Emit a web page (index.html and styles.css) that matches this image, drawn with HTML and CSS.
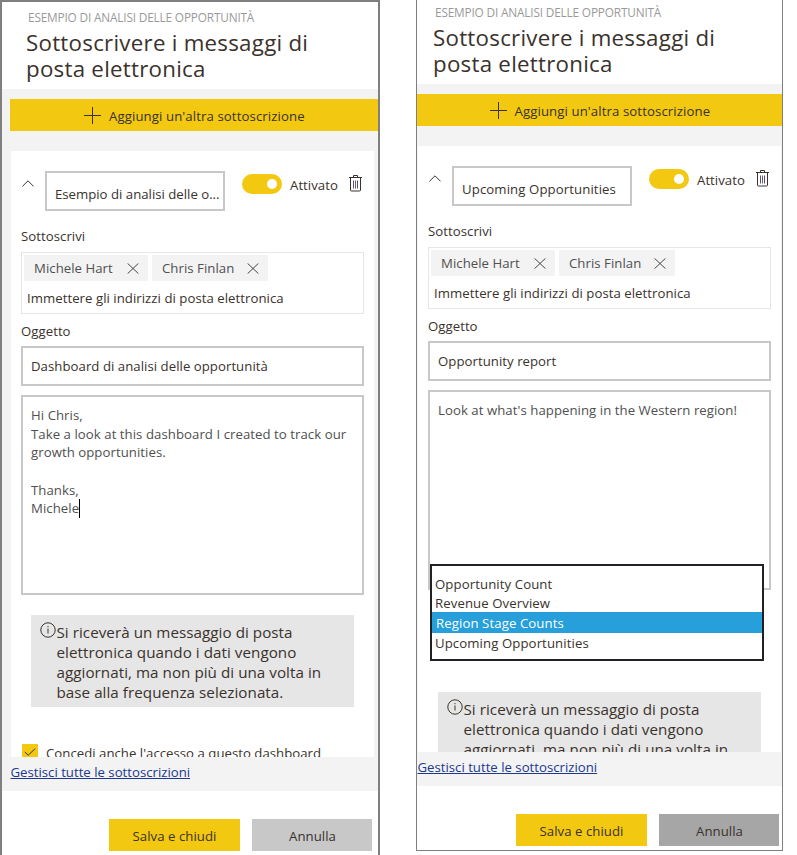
FILE: index.html
```html
<!DOCTYPE html>
<html lang="it">
<head>
<meta charset="utf-8">
<title>Sottoscrivere i messaggi di posta elettronica</title>
<link rel="stylesheet" href="styles.css">
</head>
<body>
<svg class="sprite" aria-hidden="true">
  <symbol id="plus" viewBox="0 0 17 17"><path d="M8.5 0v17M0 8.5h17"/></symbol>
  <symbol id="chevron" viewBox="0 0 12 7"><path d="M.4 6.4 6 .8l5.600 5.600"/></symbol>
  <symbol id="close" viewBox="0 0 12 11"><path d="M.6.4 11.400 10.600M11.400.4.6 10.600"/></symbol>
  <symbol id="info" viewBox="0 0 16 16"><circle cx="8" cy="8" r="7.200"/><path d="M8 6.500v5M8 4v1.200"/></symbol>
  <symbol id="trash" viewBox="0 0 13 17"><path d="M0 2.500h13M4.500 2.500v-2h4v2M1.500 2.500v12.500q0 1 1 1h8q1 0 1-1V2.500"/><path class="bar-a" d="M4.500 5.500v8"/><path class="bar-b" d="M6.500 5.500v8"/><path class="bar-a" d="M8.500 5.500v8"/></symbol>
  <symbol id="check" viewBox="0 0 12 8"><path d="M.8 4 4.200 7.200 11.200.6"/></symbol>
</svg>
<main class="stage">
  <section class="panel panel-left">
    <header class="head">
      <div class="eyebrow">ESEMPIO DI ANALISI DELLE OPPORTUNITÀ</div>
      <h1>Sottoscrivere i messaggi di<br>posta elettronica</h1>
    </header>
    <div class="body">
      <div class="add"><svg class="i-plus"><use href="#plus"/></svg><span>Aggiungi un'altra sottoscrizione</span></div>
      <div class="card">
        <div class="top">
          <svg class="i-chevron"><use href="#chevron"/></svg>
          <div class="name">Esempio di analisi delle o...</div>
          <div class="toggle"><i></i></div>
          <span class="state">Attivato</span>
          <svg class="i-trash"><use href="#trash"/></svg>
        </div>
        <div class="label">Sottoscrivi</div>
        <div class="people">
          <div class="tags">
            <span class="tag tag-one">Michele Hart<svg class="i-close"><use href="#close"/></svg></span>
            <span class="tag tag-two">Chris Finlan<svg class="i-close"><use href="#close"/></svg></span>
          </div>
          <div class="hint">Immettere gli indirizzi di posta elettronica</div>
        </div>
        <div class="label label-subject">Oggetto</div>
        <div class="subject">Dashboard di analisi delle opportunità</div>
        <div class="message">Hi Chris,<br>Take a look at this dashboard I created to track our<br>growth opportunities.<br><br>Thanks,<br>Michele<span class="caret"></span></div>
        <div class="notice"><svg class="i-info"><use href="#info"/></svg><p>Si riceverà un messaggio di posta<br>elettronica quando i dati vengono<br>aggiornati, ma non più di una volta in<br>base alla frequenza selezionata.</p></div>
        <div class="grant"><span class="box"><svg class="i-check"><use href="#check"/></svg></span><span>Concedi anche l'accesso a questo dashboard</span></div>
      </div>
      <div class="manage"><a>Gestisci tutte le sottoscrizioni</a></div>
    </div>
    <footer class="actions"><div class="btn save">Salva e chiudi</div><div class="btn cancel">Annulla</div></footer>
  </section>

  <section class="panel panel-right">
    <header class="head">
      <div class="eyebrow">ESEMPIO DI ANALISI DELLE OPPORTUNITÀ</div>
      <h1>Sottoscrivere i messaggi di<br>posta elettronica</h1>
    </header>
    <div class="body">
      <div class="add"><svg class="i-plus"><use href="#plus"/></svg><span>Aggiungi un'altra sottoscrizione</span></div>
      <div class="card">
        <div class="top">
          <svg class="i-chevron"><use href="#chevron"/></svg>
          <div class="name">Upcoming Opportunities</div>
          <div class="toggle"><i></i></div>
          <span class="state">Attivato</span>
          <svg class="i-trash"><use href="#trash"/></svg>
        </div>
        <div class="label">Sottoscrivi</div>
        <div class="people">
          <div class="tags">
            <span class="tag tag-one">Michele Hart<svg class="i-close"><use href="#close"/></svg></span>
            <span class="tag tag-two">Chris Finlan<svg class="i-close"><use href="#close"/></svg></span>
          </div>
          <div class="hint">Immettere gli indirizzi di posta elettronica</div>
        </div>
        <div class="label label-subject">Oggetto</div>
        <div class="subject">Opportunity report</div>
        <div class="message">Look at what's happening in the Western region!
          <div class="menu">
            <div>Opportunity Count</div>
            <div>Revenue Overview</div>
            <div class="selected">Region Stage Counts</div>
            <div>Upcoming Opportunities</div>
          </div>
        </div>
        <div class="notice"><svg class="i-info"><use href="#info"/></svg><p>Si riceverà un messaggio di posta<br>elettronica quando i dati vengono<br>aggiornati, ma non più di una volta in</p></div>
      </div>
      <div class="manage"><a>Gestisci tutte le sottoscrizioni</a></div>
    </div>
    <footer class="actions"><div class="btn save">Salva e chiudi</div><div class="btn cancel">Annulla</div></footer>
  </section>
</main>
</body>
</html>
```
FILE: styles.css
```css
* { box-sizing: border-box; }
body { margin: 0; background: #fff; color: #3a322c; font: 13.2px/18px "Open Sans", "Noto Sans", sans-serif; letter-spacing: .04px; overflow: hidden; }
svg { display: block; flex: none; fill: none; stroke: #3a322c; stroke-width: 1; }
.sprite { width: 0; height: 0; position: absolute; }
.stage { display: flex; align-items: flex-start; height: 855px; overflow: hidden; white-space: nowrap; }
.panel { flex: none; display: flex; flex-direction: column; background: #fff; }
.panel-left { width: 380px; height: 870px; border: 2px solid #7f7f7f; }
.panel-right { width: 367px; height: 851px; margin-left: 36px; border: 1px solid #7f7f7f; border-top: 0; }
.head { height: 87px; padding: 6px 0 0 24px; }
.eyebrow { height: 22px; padding-left: 2px; color: #999; font-size: 11.8px; line-height: 18px; letter-spacing: -.16px; }
h1 { margin: 0; font-size: 22.3px; line-height: 26px; font-weight: 400; letter-spacing: .26px; }
.body { height: 702px; padding-top: 10px; background: #f3f3f3; }
.add { display: flex; align-items: center; gap: 8px; height: 32px; margin-left: 8px; padding-left: 74px; background: #f2c811; }
.add span { padding-top: 2px; letter-spacing: .1px; }
.i-plus { width: 17px; height: 17px; }
.card { width: 363px; height: 606px; margin: 20px 0 0 9px; padding: 20px 10px 0; overflow: hidden; background: #fff; }
.top { display: flex; align-items: flex-start; height: 40px; }
.i-chevron { width: 12px; height: 7px; margin: 9px 11px 0 1px; }
.name { width: 180px; height: 40px; padding: 12px 0 0 8px; border: 2px solid #c8c8c8; letter-spacing: 0; }
.panel-right .name { letter-spacing: .1px; }
.toggle { display: flex; justify-content: flex-end; align-items: center; width: 40px; height: 20px; margin: 3px 8px 0 17px; padding-right: 5px; border-radius: 10px; background: #f2c811; }
.toggle i { width: 10px; height: 10px; border-radius: 50%; background: #fff; }
.state { width: 59px; padding-top: 5px; }
.i-trash { width: 13px; height: 17px; margin-top: 4px; }
.bar-a { stroke: #7a3d87; }
.bar-b { stroke: #397d4d; }
.label { height: 25px; margin-top: 16px; }
.people { width: 343px; height: 62px; padding: 2px; border: 1px solid #e6e6e6; }
.tags { display: flex; gap: 4px; }
.tag { display: flex; align-items: center; justify-content: space-between; height: 26px; padding: 0 9px 0 10px; background: #f3f3f3; color: #505050; }
.tag-one { width: 124px; }
.tag-two { width: 116px; }
.i-close { width: 12px; height: 11px; stroke: #444; }
.hint { padding: 8px 0 0 3px; }
.label-subject { margin-top: 8px; height: 24px; }
.subject { width: 343px; height: 40px; padding: 9px 0 0 8px; border: 2px solid #c8c8c8; }
.message { position: relative; width: 343px; height: 200px; margin-top: 9px; padding: 9px 0 0 8px; border: 2px solid #c8c8c8; color: #505050; line-height: 18.67px; letter-spacing: .05px; }
.caret { display: inline-block; width: 1px; height: 19px; margin: -5px 0 -5px; background: #000; vertical-align: baseline; }
.notice { display: flex; width: 323px; height: 92px; margin: 20px 0 0 10px; padding: 7px 0 0 8px; background: #e6e6e6; font-size: 15.2px; line-height: 20px; }
.notice p { margin: 0; padding-left: 1px; }
.i-info { width: 16px; height: 16px; margin-left: .5px; }
.grant { display: flex; gap: 8px; margin: 37px 0 0 1px; letter-spacing: .02px; }
.box { width: 16px; height: 16px; padding: 4px 2px; background: #f2c811; }
.i-check { width: 12px; height: 8px; }
.manage { padding: 6px 0 0 8.5px; letter-spacing: 0; }
.manage a { color: #20388f; text-decoration: underline; }
.actions { display: flex; gap: 12px; padding: 28px 0 0 107px; }
.btn { height: 32px; padding-top: 8px; text-align: center; }
.save { width: 131px; background: #f2c811; }
.cancel { width: 120px; padding-left: 1px; background: #c8c8c8; }
.menu { position: absolute; left: 0; top: 172px; width: 334px; height: 97px; padding-top: 8px; border: 2px solid #202124; background: #fff; color: #3a322c; letter-spacing: .09px; z-index: 2; }
.menu div { height: 19px; padding-left: 3px; line-height: 20px; }
.menu .selected { height: 21px; padding-left: 4px; line-height: 22px; background: #269fdb; color: #fff; }
.panel-right .head { height: 84px; padding: 3px 0 0 16px; }
.panel-right .add { margin-left: 0; padding-left: 72.500px; }
.panel-right .card { margin-left: 1px; }
.panel-right .notice { margin-top: 102px; }
.panel-right .manage { padding-left: .5px; }
.panel-right .actions { padding-left: 99px; }
.panel-right .cancel { background: #a6a6a6; }
```
